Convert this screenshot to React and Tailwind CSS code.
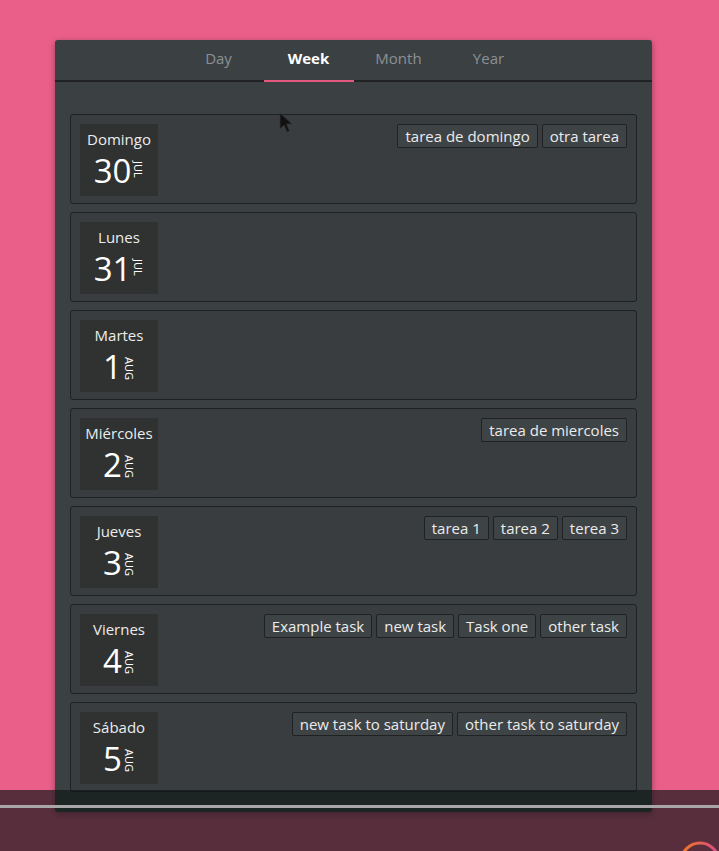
import React from 'react';

const days = [
  { name: 'Domingo', num: '30', month: 'JUL', tasks: ['tarea de domingo', 'otra tarea'] },
  { name: 'Lunes', num: '31', month: 'JUL', tasks: [] },
  { name: 'Martes', num: '1', month: 'AUG', tasks: [] },
  { name: 'Miércoles', num: '2', month: 'AUG', tasks: ['tarea de miercoles'] },
  { name: 'Jueves', num: '3', month: 'AUG', tasks: ['tarea 1', 'tarea 2', 'terea 3'] },
  { name: 'Viernes', num: '4', month: 'AUG', tasks: ['Example task', 'new task', 'Task one', 'other task'] },
  { name: 'Sábado', num: '5', month: 'AUG', tasks: ['new task to saturday', 'other task to saturday'] },
];

const tabs = ['Day', 'Week', 'Month', 'Year'];

const DayRow = ({ day }) => (
  <div className="h-[90px] flex items-start justify-between p-[9px] bg-[#393d40] border border-[#1f2123] rounded-[3px]">
    <div className="w-[78px] h-[72px] bg-[#2f3231] flex flex-col items-center pt-[5px]">
      <span className="text-[15px] leading-[20px] text-[#ececec]">{day.name}</span>
      <div className="flex items-start mt-[4px]">
        <span className="text-[33px] leading-[36px] text-white">{day.num}</span>
        <span className="text-[11px] leading-[11px] text-white mt-[8px] ml-[2px] [writing-mode:vertical-rl]">{day.month}</span>
      </div>
    </div>
    <div className="flex gap-[4px]">
      {day.tasks.map((t) => (
        <span
          key={t}
          className="h-[24px] px-[7px] flex items-center text-[15px] text-[#ebebeb] bg-[#3e4346] border border-[#1f2123] rounded-[2px]"
        >
          {t}
        </span>
      ))}
    </div>
  </div>
);

export default function App() {
  return (
    <div className="relative h-[851px] w-[719px] overflow-hidden bg-[#e95f8a] font-['Open_Sans',sans-serif]">
      <div className="pt-[40px] pl-[55px]">
        <div className="w-[597px] bg-[#3b4043] rounded-[3px] shadow-[0_2px_6px_rgba(0,0,0,0.35)] pb-[20px]">
          <div className="h-[42px] flex justify-center border-b-2 border-[#202224]">
            {tabs.map((t) => (
              <div
                key={t}
                className={`w-[90px] flex items-center justify-center text-[15px] pb-[3px] ${
                  t === 'Week'
                    ? 'font-bold text-white border-b-2 border-[#e4587f] mb-[-2px]'
                    : 'text-[#8b9094]'
                }`}
              >
                {t}
              </div>
            ))}
          </div>
          <div className="flex flex-col gap-[8px] px-[15px] pt-[32px]">
            {days.map((d) => (
              <DayRow key={d.name} day={d} />
            ))}
          </div>
        </div>
      </div>

      {/* mouse pointer */}
      <svg className="absolute left-[279px] top-[112px]" width="14" height="22" viewBox="0 0 14 22">
        <path d="M1 1 L1 17 L5 13 L8 20 L10.5 19 L7.5 12 L13 12 Z" fill="#111" stroke="#333" strokeWidth="0.8" />
      </svg>

      {/* video overlay */}
      <div className="absolute left-0 right-0 bottom-0 h-[61px] bg-[rgba(13,21,20,0.66)]">
        <div className="mt-[15px] h-[3px] bg-[#a9a6a7]" />
      </div>
      <svg className="absolute left-[676px] top-[838px]" width="48" height="30" viewBox="0 0 48 30">
        <defs>
          <linearGradient id="ring" x1="0" y1="0" x2="1" y2="0">
            <stop offset="0" stopColor="#f07a1e" />
            <stop offset="1" stopColor="#d84a8a" />
          </linearGradient>
        </defs>
        <circle cx="24" cy="24" r="19" fill="none" stroke="url(#ring)" strokeWidth="3" />
      </svg>
    </div>
  );
}
